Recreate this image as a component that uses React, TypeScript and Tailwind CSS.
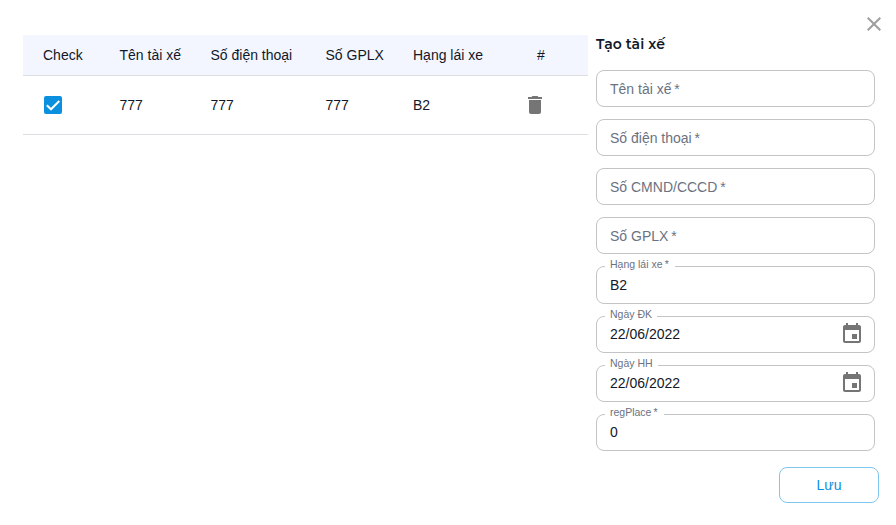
import React from "react";

const columns = ["Check", "Tên tài xế", "Số điện thoại", "Số GPLX"];
const drivers = [["777", "777", "777", "B2"]];

const rowGrid =
  "grid grid-cols-[76.5px_91px_115px_87.5px_175px] items-center border-b border-[#dcdee1] pl-5 text-sm text-[#121828]";

function CalendarIcon() {
  return (
    <svg viewBox="0 0 24 24" className="h-6 w-6 fill-[#757575]">
      <path d="M17 12h-5v5h5v-5zM16 1v2H8V1H6v2H5c-1.11 0-1.99.9-1.99 2L3 19c0 1.1.89 2 2 2h14c1.1 0 2-.9 2-2V5c0-1.1-.9-2-2-2h-1V1h-2zm3 18H5V8h14v11z" />
    </svg>
  );
}

function EmptyField({ label }: { label: string }) {
  return (
    <div className="flex h-[37px] items-center rounded-lg border border-[#c4c4c4] px-[13px] text-sm text-[#6b7280]">
      {label}&thinsp;*
    </div>
  );
}

type FilledFieldProps = {
  label: string;
  value: string;
  notch: string;
  height?: string;
  required?: boolean;
  date?: boolean;
};

function FilledField({ label, value, notch, height = "h-[37px] pb-px", required, date }: FilledFieldProps) {
  return (
    <div className={`relative flex items-center justify-between pr-[11px] pl-3.5 text-sm text-[#121828] ${height}`}>
      <span>{value}</span>
      {date && <CalendarIcon />}
      <fieldset className="pointer-events-none absolute inset-x-0 -top-[5px] bottom-0 rounded-lg border border-[#c4c4c4] pl-2">
        <legend className={`h-[11px] ${notch}`} />
      </fieldset>
      <label className="absolute -top-2 left-3.5 text-[10.5px] leading-3 whitespace-nowrap text-[#6b7280]">
        {label}
        {required && <>&thinsp;*</>}
      </label>
    </div>
  );
}

export default function App() {
  return (
    <main className="relative flex h-[525px] w-[896px] bg-white pl-[23px] font-['Liberation_Sans',Arial,sans-serif]">
      <section className="w-[565px] pt-[35px]">
        <div className={`${rowGrid} h-[41px] bg-[#f3f6ff]`}>
          {columns.map((column) => (
            <span key={column} className="whitespace-nowrap">
              {column}
            </span>
          ))}
          <span className="flex">
            <span className="w-[124px]">Hạng lái xe</span>
            <span>#</span>
          </span>
        </div>
        {drivers.map((driver, index) => (
          <div key={index} className={`${rowGrid} h-[59px]`}>
            <span className="ml-px flex h-[18px] w-[18px] items-center justify-center rounded-[2px] bg-[#0b8fdf]">
              <svg viewBox="0 0 18 18" className="h-[18px] w-[18px] fill-none stroke-white stroke-2">
                <path d="M2.8 9.2 7 13.3 15.3 5" />
              </svg>
            </span>
            <span>{driver[0]}</span>
            <span>{driver[1]}</span>
            <span>{driver[2]}</span>
            <span className="flex items-center">
              <span className="w-[110px]">{driver[3]}</span>
              <svg viewBox="0 0 24 24" className="h-6 w-6 fill-[#757575]">
                <path d="M6 19c0 1.1.9 2 2 2h8c1.1 0 2-.9 2-2V7H6v12zM19 4h-3.5l-1-1h-5l-1 1H5v2h14V4z" />
              </svg>
            </span>
          </div>
        ))}
      </section>

      <section className="ml-2 w-[283px] pt-[34px]">
        <h1 className="h-9 font-['Montserrat','Inter',sans-serif] text-sm leading-5 font-semibold tracking-[0.1px] text-[#121828]">
          Tạo tài xế
        </h1>
        <form className="flex w-[279px] flex-col gap-3">
          <EmptyField label="Tên tài xế" />
          <EmptyField label="Số điện thoại" />
          <EmptyField label="Số CMND/CCCD" />
          <EmptyField label="Số GPLX" />
          <FilledField label="Hạng lái xe" value="B2" notch="w-[70px]" height="h-[38px]" required />
          <FilledField label="Ngày ĐK" value="22/06/2022" notch="w-[52px]" date />
          <FilledField label="Ngày HH" value="22/06/2022" notch="w-[53px]" date />
          <FilledField label="regPlace" value="0" notch="w-[59px]" required />
        </form>
        <div className="mt-4 flex justify-end">
          <button className="h-9 w-[100px] rounded-lg border border-[#7fc6ee] text-sm text-[#0b8fdf]">Lưu</button>
        </div>
      </section>

      <button aria-label="Đóng" className="absolute top-3 right-[10px] h-6 w-6">
        <svg viewBox="0 0 24 24" className="h-6 w-6 fill-[#9e9e9e]">
          <path d="M19 6.41 17.59 5 12 10.59 6.41 5 5 6.41 10.59 12 5 17.59 6.41 19 12 13.41 17.59 19 19 17.59 13.41 12z" />
        </svg>
      </button>
    </main>
  );
}
